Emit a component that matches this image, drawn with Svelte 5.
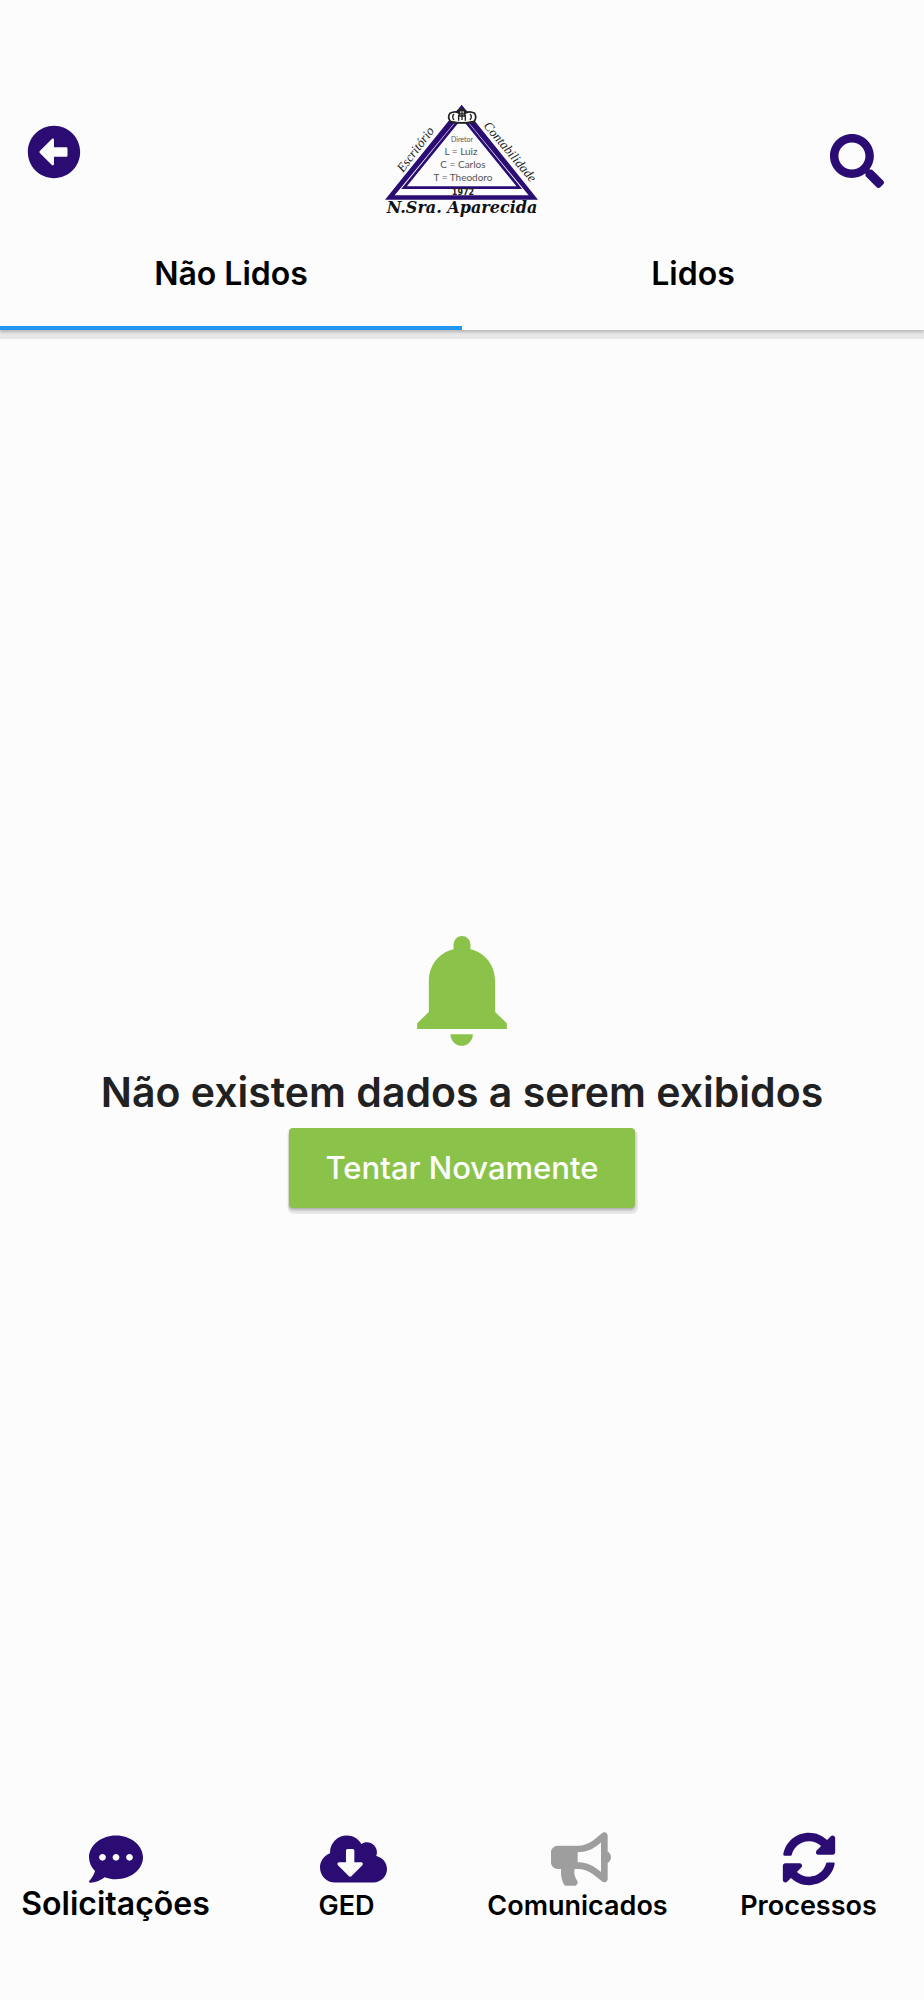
<script>
  let active = $state(0);
  const tabs = ['Não Lidos', 'Lidos'];

  const items = [
    {
      label: 'Solicitações',
      box: '0 0 512 512',
      width: 54,
      large: true,
      path: 'M256 32C114.6 32 0 125.1 0 240c0 49.6 21.4 95 57 130.7C44.5 421.1 2.7 466 2.2 466.5c-2.2 2.3-2.8 5.7-1.5 8.7S4.8 480 8 480c66.3 0 116-31.8 140.6-51.4 32.7 12.3 69 19.4 107.4 19.4 141.4 0 256-93.1 256-208S397.4 32 256 32zM128 272c-17.7 0-32-14.3-32-32s14.3-32 32-32 32 14.3 32 32-14.3 32-32 32zm128 0c-17.7 0-32-14.3-32-32s14.3-32 32-32 32 14.3 32 32-14.3 32-32 32zm128 0c-17.7 0-32-14.3-32-32s14.3-32 32-32 32 14.3 32 32-14.3 32-32 32z'
    },
    {
      label: 'GED',
      box: '0 0 640 512',
      width: 67,
      path: 'M537.6 226.6c4.1-10.7 6.4-22.4 6.4-34.6 0-53-43-96-96-96-19.7 0-38.1 6-53.3 16.2C367 64.2 315.3 32 256 32c-88.4 0-160 71.6-160 160 0 2.7.1 5.4.2 8.1C40.2 219.8 0 273.2 0 336c0 79.5 64.5 144 144 144h368c70.7 0 128-57.3 128-128 0-61.9-44-113.6-102.4-125.4zm-132.9 88.7L299.3 420.7c-6.2 6.2-16.4 6.2-22.6 0L171.3 315.3c-10.1-10.1-2.9-27.3 11.3-27.3H248V176c0-8.8 7.2-16 16-16h48c8.8 0 16 7.2 16 16v112h65.4c14.2 0 21.4 17.2 11.3 27.3z'
    },
    {
      label: 'Comunicados',
      box: '0 0 576 512',
      width: 60,
      current: true,
      path: 'M576 240c0-23.63-12.95-44.04-32-55.12V32.01C544 23.26 537.02 0 512 0c-7.12 0-14.19 2.38-19.98 7.02l-85.03 68.03C364.28 109.19 310.66 128 256 128H64c-35.35 0-64 28.65-64 64v96c0 35.35 28.65 64 64 64h33.7c-1.39 10.48-2.18 21.14-2.18 32 0 39.77 9.26 77.35 25.56 110.94 5.19 10.69 16.52 17.06 28.4 17.06h74.28c26.05 0 41.69-29.84 25.9-50.56-16.4-21.52-26.15-48.36-26.15-77.44 0-11.11 1.62-21.79 4.41-32H256c54.66 0 108.28 18.81 150.98 52.95l85.03 68.03a32.023 32.023 0 0 0 19.98 7.02c24.92 0 32-22.78 32-32V295.13C563.05 284.04 576 263.63 576 240zm-96 141.42l-33.05-26.44C392.95 311.78 325.12 288 256 288v-96c69.12 0 136.95-23.78 190.95-66.98L480 98.58v282.84z'
    },
    {
      label: 'Processos',
      box: '0 0 512 512',
      width: 54,
      path: 'M370.72 133.28C339.458 104.008 298.888 87.962 255.848 88c-77.458.068-144.328 53.178-162.791 126.85-1.344 5.363-6.122 9.15-11.651 9.15H24.103c-7.498 0-13.194-6.807-11.807-14.176C33.933 94.924 134.813 8 256 8c66.448 0 126.791 26.136 171.315 68.685L463.03 40.97C478.149 25.851 504 36.559 504 57.941V192c0 13.255-10.745 24-24 24H345.941c-21.382 0-32.09-25.851-16.971-40.971l41.75-41.749zM32 296h134.059c21.382 0 32.09 25.851 16.971 40.971l-41.75 41.75c31.262 29.273 71.835 45.319 114.876 45.28 77.418-.07 144.315-53.144 162.787-126.849 1.344-5.363 6.122-9.15 11.651-9.15h57.304c7.498 0 13.194 6.807 11.807 14.176C478.067 417.076 377.187 504 256 504c-66.448 0-126.791-26.136-171.315-68.685L48.97 471.03C33.851 486.149 8 475.441 8 454.059V320c0-13.255 10.745-24 24-24z'
    }
  ];
</script>

<div class="page">
  <header>
    <div class="bar">
      <button class="icon back" aria-label="Voltar">
        <svg viewBox="0 0 512 512" width="54" height="54"><path d="M256 504C119 504 8 393 8 256S119 8 256 8s248 111 248 248-111 248-248 248zm116-292H256v-70.9c0-10.7-13-16.1-20.5-8.5L121.2 247.5c-4.7 4.7-4.7 12.2 0 16.9l114.3 114.9c7.6 7.6 20.5 2.2 20.5-8.5V300h116c6.6 0 12-5.4 12-12v-64c0-6.6-5.4-12-12-12z" /></svg>
      </button>

      <svg class="logo" viewBox="0 10 184 118" width="184" height="118">
        <svg viewBox="0 0 552 420" width="184" height="140">
          <path fill="#2a0c72" fill-rule="evenodd" d="M275 44 504 329H45ZM275 72 74 316H476Z" />
          <path fill="none" stroke="#2a0c72" stroke-width="8" d="M275 80 102 293H448Z" />
          <path fill="#fcfcfc" stroke="#222" stroke-width="5" d="M240 70q18-10 30 2q-6-10 6-12q12 2 6 12q14-12 32-2q8 14-4 27q-32 4-66 0q-14-14-4-27Z" />
          <path fill="none" stroke="#222" stroke-width="4" d="M242 94q34 8 68 0M252 90q-8-10 0-18M266 92V76q10-10 20 0V92M300 90q8-10 0-18M258 66l16-12 18 12M276 62V90M266 78h20" />
        </svg>
        <g class="names" text-anchor="middle">
          <text x="92" y="52" font-size="7">Diretor</text>
          <text x="91" y="65" font-size="10">L = Luiz</text>
          <text x="93" y="78" font-size="10">C = Carlos</text>
          <text x="93" y="91" font-size="10">T = Theodoro</text>
        </g>
        <text class="year" x="93" y="105" text-anchor="middle">1972</text>
        <text class="script" x="0" y="0" font-size="13" transform="translate(33 83) rotate(-53)">Escritório</text>
        <text class="script" x="0" y="0" font-size="13" transform="translate(113 36) rotate(50)">Contabilidade</text>
        <text class="base" x="92" y="123" text-anchor="middle">N.Sra. Aparecida</text>
      </svg>

      <button class="icon search" aria-label="Pesquisar">
        <svg viewBox="0 0 512 512" width="54" height="54"><path d="M505 442.7L405.3 343c-4.5-4.5-10.6-7-17-7H372c27.6-35.3 44-79.7 44-128C416 93.1 322.9 0 208 0S0 93.1 0 208s93.1 208 208 208c48.3 0 92.7-16.4 128-44v16.3c0 6.4 2.5 12.5 7 17l99.7 99.7c9.4 9.4 24.6 9.4 33.9 0l28.3-28.3c9.4-9.4 9.4-24.6.1-34zM208 336c-70.7 0-128-57.2-128-128 0-70.7 57.2-128 128-128 70.7 0 128 57.2 128 128 0 70.7-57.2 128-128 128z" /></svg>
      </button>
    </div>

    <div class="tabs" role="tablist">
      {#each tabs as tab, i}
        <button role="tab" aria-selected={active === i} onclick={() => (active = i)}>{tab}</button>
      {/each}
    </div>
  </header>

  <main>
    <svg viewBox="52 47 269 330" width="90" height="110">
      <path fill="#8bc34a" d="M161 87V72.500a25.500 25.500 0 0 1 51 0V87C256 97 286 136 286 183V275L321 309V326H52V309L87 275V183C87 136 117 97 161 87ZM152 342H219A33.500 34.500 0 0 1 152 342Z" />
    </svg>
    <p>Não existem dados a serem exibidos</p>
    <button class="retry">Tentar Novamente</button>
  </main>

  <nav>
    {#each items as item}
      <a href="#{item.label}" class:large={item.large} class:current={item.current} aria-current={item.current ? 'page' : undefined}>
        <span class="glyph"><svg viewBox={item.box} width={item.width} height="54"><path d={item.path} /></svg></span>
        <span class="label">{item.label}</span>
      </a>
    {/each}
  </nav>
</div>

<style>
  :global(body) {
    margin: 0;
    background: #fcfcfc;
  }
  .page {
    min-height: 100vh;
    display: flex;
    flex-direction: column;
    font-family: Inter, "Liberation Sans", sans-serif;
    font-weight: 600;
    color: #000;
    background: #fcfcfc;
  }
  svg {
    display: block;
    flex: none;
  }
  button {
    margin: 0;
    padding: 0;
    border: 0;
    background: none;
    font: inherit;
    color: inherit;
    cursor: pointer;
  }
  header {
    padding-top: 100px;
    box-shadow: 0 2px 3px rgba(0, 0, 0, 0.22), 0 9px 0 #e7e7e7;
    background: #fcfcfc;
  }
  .bar {
    display: grid;
    grid-template-columns: 1fr auto 1fr;
    align-items: start;
    padding: 0 27px;
  }
  .icon {
    fill: #2a0c72;
  }
  .back {
    justify-self: start;
    padding-top: 25px;
  }
  .search {
    justify-self: end;
    padding: 34px 13px 0 0;
  }
  .names {
    fill: #555;
    font-family: Lato, sans-serif;
    font-weight: 400;
  }
  .year {
    font: bold 8px "DejaVu Sans", sans-serif;
    fill: #222;
  }
  .script {
    font-family: "Liberation Serif", serif;
    font-style: italic;
    font-weight: 400;
    fill: #222;
  }
  .base {
    font: italic bold 16px "DejaVu Serif", serif;
    fill: #111;
  }
  .tabs {
    display: grid;
    grid-template-columns: 1fr 1fr;
  }
  .tabs button {
    height: 112px;
    border-bottom: 4px solid transparent;
    padding-top: 2px;
    font-size: 32px;
  }
  .tabs button[aria-selected='true'] {
    border-bottom-color: #2196f3;
  }
  main {
    flex: 1;
    display: flex;
    flex-direction: column;
    align-items: center;
    justify-content: center;
    padding-top: 7px;
  }
  p {
    margin: 22px 0 12px;
    font-size: 41px;
    line-height: 48px;
    color: #212121;
    text-align: center;
  }
  .retry {
    height: 80px;
    padding: 0 37px;
    border-radius: 4px;
    background: #8bc34a;
    color: #fff;
    font-size: 31px;
    font-weight: 500;
    box-shadow: 0 2px 3px rgba(0, 0, 0, 0.25), 1px 4px 0 2px #e9e9e9;
  }
  nav {
    display: grid;
    grid-template-columns: repeat(4, 1fr);
    padding: 26px 0 74px;
  }
  a {
    display: flex;
    flex-direction: column;
    align-items: center;
    color: inherit;
    text-decoration: none;
    font-size: 27px;
    line-height: 40px;
  }
  .large {
    font-size: 32px;
    line-height: 36px;
  }
  .glyph {
    width: 54px;
    fill: #2a0c72;
  }
  .current .glyph {
    fill: #9e9e9e;
  }
</style>
